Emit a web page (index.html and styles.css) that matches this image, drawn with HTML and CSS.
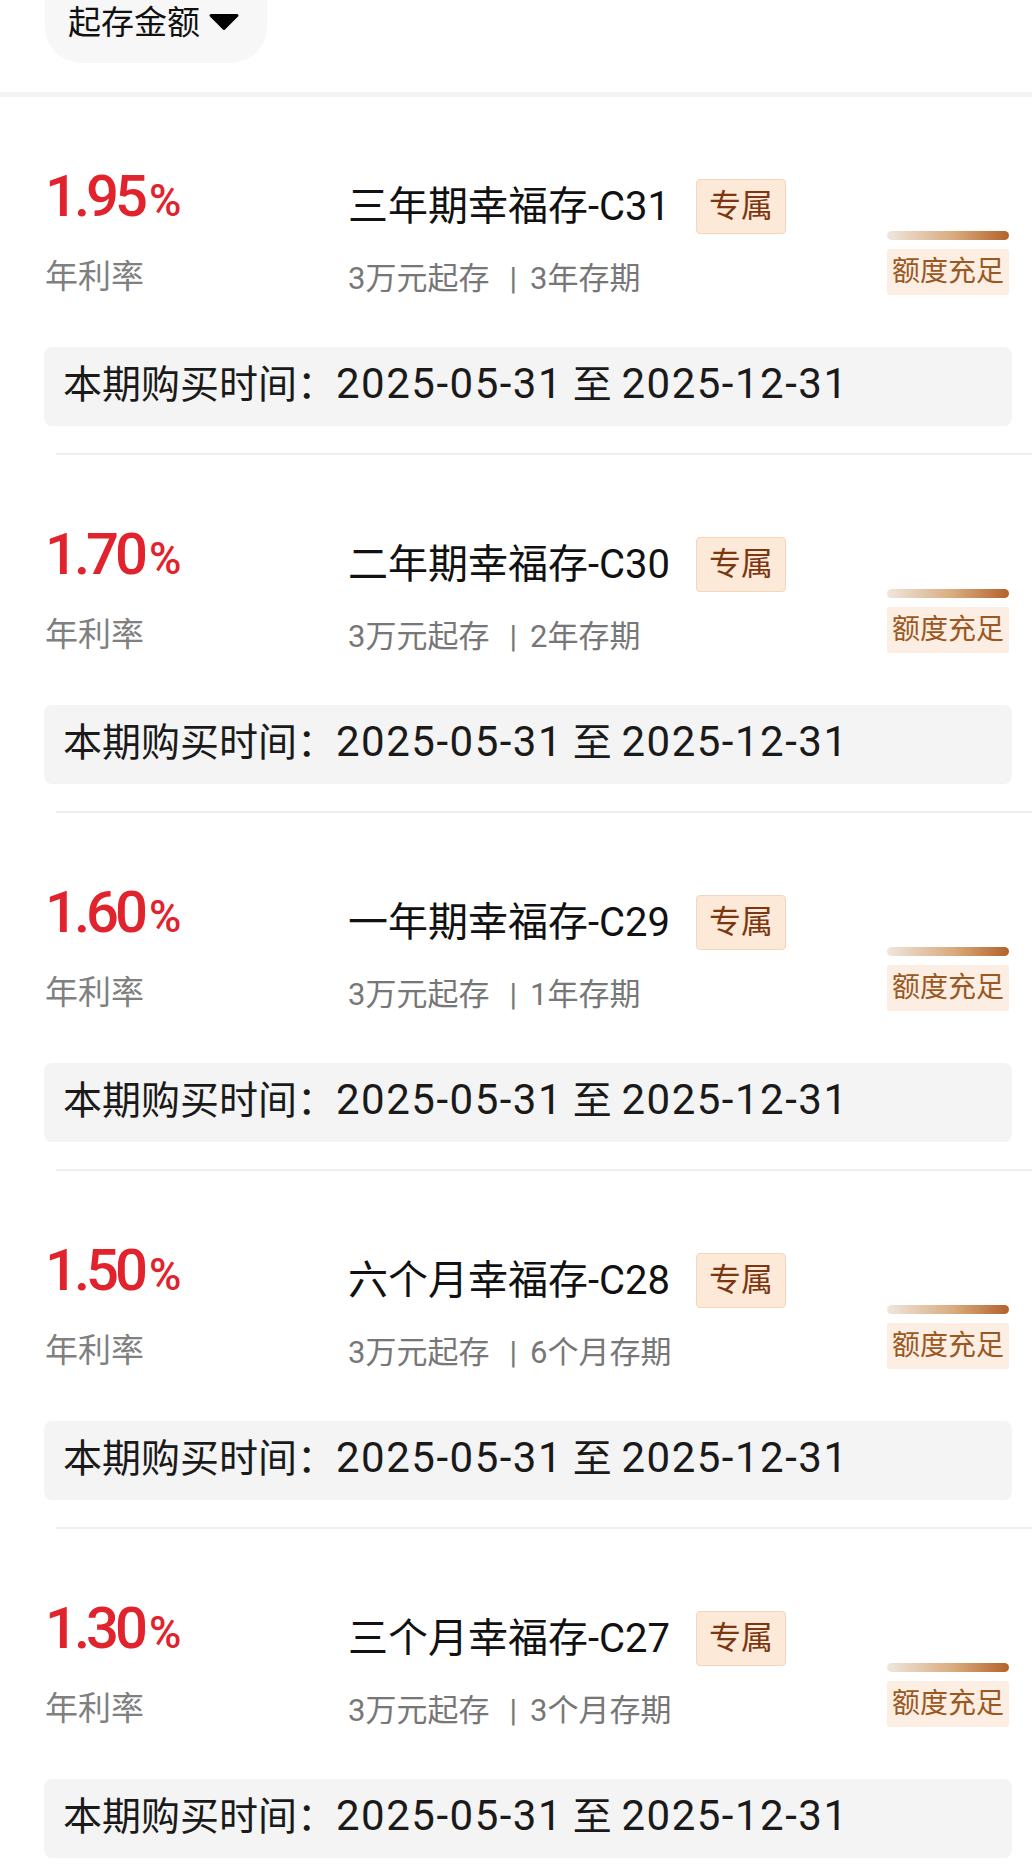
FILE: index.html
```html
<!DOCTYPE html>
<html lang="zh-CN">
<head>
  <meta charset="UTF-8">
  <meta name="viewport" content="width=device-width, initial-scale=1.0">
  <title>幸福存</title>
  <link rel="stylesheet" href="styles.css">
</head>
<body>

  <div class="filter-bar">
    <div class="filter-pill">
      <span>起存金额</span>
      <svg class="caret" width="32" height="18" viewBox="0 0 32 18"><path d="M3 2.5 H29 L16 15.5 Z"/></svg>
    </div>
  </div>
  <div class="filter-line"></div>

  <!-- 产品列表 -->
  <div class="product">
    <div class="summary">
      <div class="rate-col">
        <div class="rate">1.95<span class="pct">%</span></div>
        <div class="rate-label">年利率</div>
      </div>
      <div class="info-col">
        <div class="title-row">
          <span class="name">三年期幸福存-C31</span>
          <span class="tag">专属</span>
        </div>
        <div class="terms">3万元起存<span class="sep">|</span>3年存期</div>
      </div>
      <div class="quota-col">
        <div class="quota-bar"></div>
        <div class="quota-tag">额度充足</div>
      </div>
    </div>
    <div class="period">本期购买时间：<span class="num">2025-05-31</span> 至 <span class="num">2025-12-31</span></div>
  </div>
  <div class="divider"></div>

  <div class="product">
    <div class="summary">
      <div class="rate-col">
        <div class="rate">1.70<span class="pct">%</span></div>
        <div class="rate-label">年利率</div>
      </div>
      <div class="info-col">
        <div class="title-row">
          <span class="name">二年期幸福存-C30</span>
          <span class="tag">专属</span>
        </div>
        <div class="terms">3万元起存<span class="sep">|</span>2年存期</div>
      </div>
      <div class="quota-col">
        <div class="quota-bar"></div>
        <div class="quota-tag">额度充足</div>
      </div>
    </div>
    <div class="period">本期购买时间：<span class="num">2025-05-31</span> 至 <span class="num">2025-12-31</span></div>
  </div>
  <div class="divider"></div>

  <div class="product">
    <div class="summary">
      <div class="rate-col">
        <div class="rate">1.60<span class="pct">%</span></div>
        <div class="rate-label">年利率</div>
      </div>
      <div class="info-col">
        <div class="title-row">
          <span class="name">一年期幸福存-C29</span>
          <span class="tag">专属</span>
        </div>
        <div class="terms">3万元起存<span class="sep">|</span>1年存期</div>
      </div>
      <div class="quota-col">
        <div class="quota-bar"></div>
        <div class="quota-tag">额度充足</div>
      </div>
    </div>
    <div class="period">本期购买时间：<span class="num">2025-05-31</span> 至 <span class="num">2025-12-31</span></div>
  </div>
  <div class="divider"></div>

  <div class="product">
    <div class="summary">
      <div class="rate-col">
        <div class="rate">1.50<span class="pct">%</span></div>
        <div class="rate-label">年利率</div>
      </div>
      <div class="info-col">
        <div class="title-row">
          <span class="name">六个月幸福存-C28</span>
          <span class="tag">专属</span>
        </div>
        <div class="terms">3万元起存<span class="sep">|</span>6个月存期</div>
      </div>
      <div class="quota-col">
        <div class="quota-bar"></div>
        <div class="quota-tag">额度充足</div>
      </div>
    </div>
    <div class="period">本期购买时间：<span class="num">2025-05-31</span> 至 <span class="num">2025-12-31</span></div>
  </div>
  <div class="divider"></div>

  <div class="product">
    <div class="summary">
      <div class="rate-col">
        <div class="rate">1.30<span class="pct">%</span></div>
        <div class="rate-label">年利率</div>
      </div>
      <div class="info-col">
        <div class="title-row">
          <span class="name">三个月幸福存-C27</span>
          <span class="tag">专属</span>
        </div>
        <div class="terms">3万元起存<span class="sep">|</span>3个月存期</div>
      </div>
      <div class="quota-col">
        <div class="quota-bar"></div>
        <div class="quota-tag">额度充足</div>
      </div>
    </div>
    <div class="period">本期购买时间：<span class="num">2025-05-31</span> 至 <span class="num">2025-12-31</span></div>
  </div>

</body>
</html>
```

FILE: styles.css
```css
* {
  box-sizing: border-box;
  margin: 0;
  padding: 0;
}
body {
  font-family: Roboto, "Noto Sans CJK SC", sans-serif;
  background-color: #fff;
  color: #111;
  width: 1032px;
}

/* Filter bar */
.filter-bar {
  height: 92px;
  padding-left: 45px;
}
.filter-pill {
  display: inline-flex;
  align-items: flex-start;
  width: 222px;
  height: 63px;
  padding: 3px 0 0 23px;
  background-color: #f7f7f7;
  border-radius: 0 0 36px 36px;
  font-size: 33px;
  line-height: 40px;
}
.caret {
  margin: 10px 0 0 8px;
}
.caret path {
  fill: #000;
  stroke: #000;
  stroke-width: 3;
  stroke-linejoin: round;
}
.filter-line {
  height: 5px;
  background-color: #f3f3f3;
}

/* Product card */
.product {
  padding-top: 71px;
}
.summary {
  display: grid;
  grid-template-columns: 303px 1fr 122px;
  margin: 0 23px 0 45px;
}
.rate {
  font-size: 58px;
  font-weight: 500;
  line-height: 56px;
  letter-spacing: -4px;
  color: #e0232c;
}
.rate .pct {
  font-size: 44px;
  line-height: 1;
  letter-spacing: 0;
  margin-left: 5px;
}
.rate-label {
  margin-top: 33px;
  font-size: 33px;
  line-height: 40px;
  color: #808080;
}
.title-row {
  display: flex;
  align-items: center;
  margin-top: 11px;
}
.name {
  font-size: 40px;
  line-height: 48px;
  color: #111;
}
.tag {
  margin-left: 26px;
  padding: 0 12px;
  font-size: 32px;
  line-height: 53px;
  color: #7b3612;
  background-color: #fde9d7;
  border: 1px solid #f5d6bc;
  border-radius: 4px;
}
.terms {
  margin-top: 27px;
  font-size: 31px;
  line-height: 36px;
  color: #777;
}
.terms .sep {
  margin: 0 13px 0 20px;
  color: #777;
}
.quota-col {
  padding-top: 63px;
}
.quota-bar {
  height: 9px;
  border-radius: 5px;
  background: linear-gradient(90deg, #efe6de, #d9aa7d 55%, #b4622a);
}
.quota-tag {
  margin-top: 9px;
  font-size: 28px;
  line-height: 46px;
  text-align: center;
  color: #9a5823;
  background-color: #fdeee3;
  border-radius: 2px;
}
.period {
  margin: 50px 20px 27px 44px;
  padding: 0 0 3px 19px;
  font-size: 39px;
  line-height: 76px;
  color: #1a1a1a;
  background-color: #f4f4f4;
  border-radius: 8px;
}
.period .num {
  font-size: 42px;
  line-height: 1;
  letter-spacing: 1.5px;
}
.divider {
  height: 2px;
  margin-left: 56px;
  background-color: #efefef;
}
```
